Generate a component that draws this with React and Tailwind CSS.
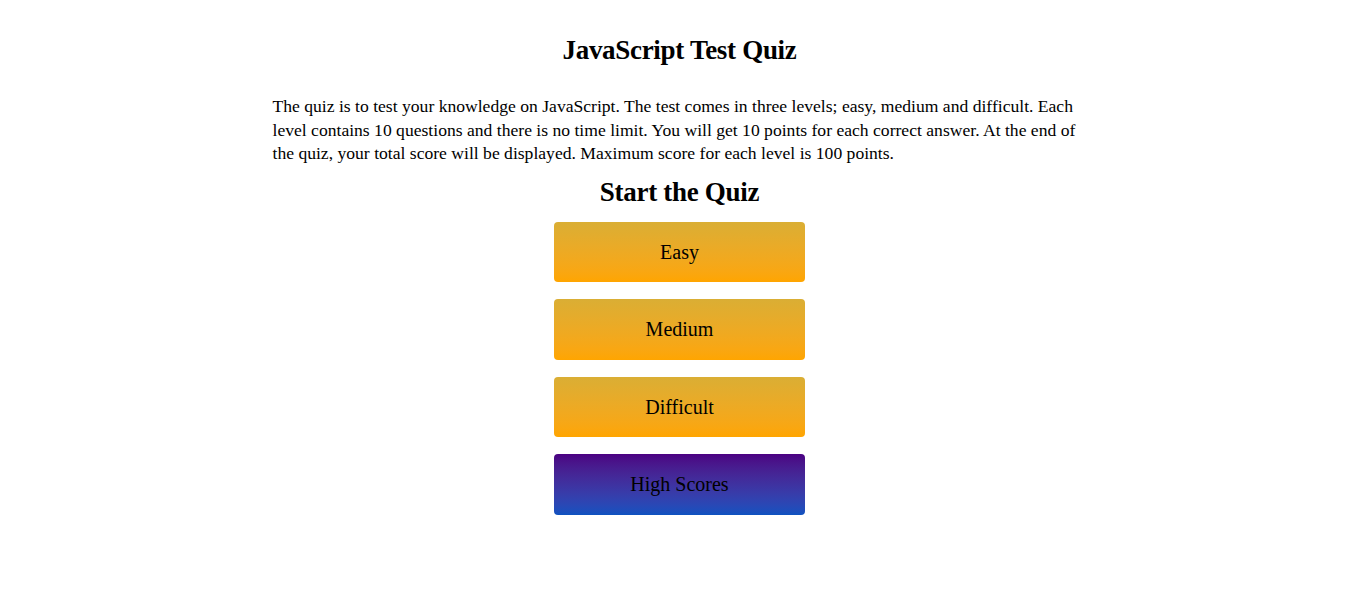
export default function App() {
  const serif = { fontFamily: '"Liberation Serif", "DejaVu Serif", serif' };
  const lines = [
    "The quiz is to test your knowledge on JavaScript. The test comes in three levels; easy, medium and difficult. Each",
    "level contains 10 questions and there is no time limit. You will get 10 points for each correct answer. At the end of",
    "the quiz, your total score will be displayed. Maximum score for each level is 100 points.",
  ];
  const btn =
    "w-[251px] h-[60.5px] rounded-[4px] flex items-center justify-center text-[20px] text-black";
  return (
    <div className="w-full min-h-[598px] bg-white text-black" style={serif}>
      <div className="w-[812px] mx-auto pt-[32px] flex flex-col items-center">
        <h1 className="ml-[2px] text-[27px] font-bold leading-[36px] tracking-[-0.3px]">JavaScript Test Quiz</h1>
        <p className="mt-[27px] w-full text-[17.6px] leading-[23.5px]">
          {lines.map((l, i) => (
            <span key={i} className="block whitespace-nowrap">
              {l}
            </span>
          ))}
        </p>
        <h2 className="ml-[2px] mt-[9px] text-[27px] font-bold leading-[34px] tracking-[-0.3px]">Start the Quiz</h2>
        <div className="ml-[2px] mt-[13px] flex flex-col gap-[17px]">
          <button className={`${btn} bg-gradient-to-b from-[#daae34] to-[#ffa500]`}>Easy</button>
          <button className={`${btn} bg-gradient-to-b from-[#daae34] to-[#ffa500]`}>Medium</button>
          <button className={`${btn} bg-gradient-to-b from-[#daae34] to-[#ffa500]`}>Difficult</button>
          <button className={`${btn} bg-gradient-to-b from-[#4b0082] to-[#0d52c0]`}>High Scores</button>
        </div>
      </div>
    </div>
  );
}
